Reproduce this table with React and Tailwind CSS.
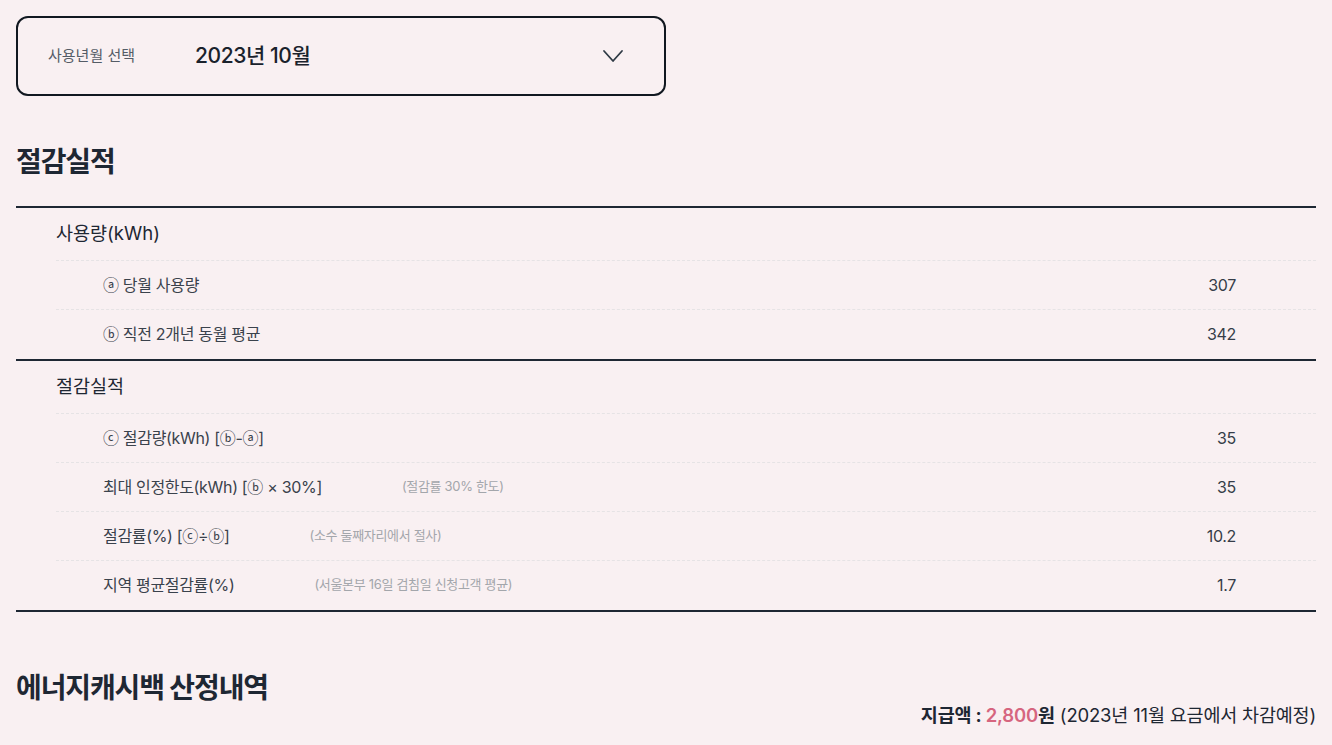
const font = { fontFamily: 'Inter, "Noto Sans CJK KR", sans-serif' };

const groups = [
  {
    title: "사용량(kWh)",
    rows: [
      { label: "ⓐ 당월 사용량", value: "307" },
      { label: "ⓑ 직전 2개년 동월 평균", value: "342" },
    ],
  },
  {
    title: "절감실적",
    rows: [
      { label: "ⓒ 절감량(kWh) [ⓑ-ⓐ]", value: "35" },
      { label: "최대 인정한도(kWh) [ⓑ × 30%]", note: "(절감률 30% 한도)", value: "35" },
      { label: "절감률(%) [ⓒ÷ⓑ]", note: "(소수 둘째자리에서 절사)", value: "10.2" },
      { label: "지역 평균절감률(%)", note: "(서울본부 16일 검침일 신청고객 평균)", value: "1.7" },
    ],
  },
];

function Chevron() {
  return (
    <svg width="22" height="16" viewBox="0 0 22 16" fill="none">
      <polyline points="2,3 11,13 20,3" stroke="#2f3a45" strokeWidth="1.8" strokeLinecap="round" strokeLinejoin="round" />
    </svg>
  );
}

export default function App() {
  return (
    <div className="min-h-screen bg-[#f9f0f2] px-4 pt-4 text-[#1e2733]" style={font}>
      {/* month select */}
      <div className="flex h-20 w-[650px] items-center rounded-xl border-2 border-[#111820] pl-[30px] pr-10">
        <span className="w-[147px] text-[15px] text-[#555c66]">사용년월 선택</span>
        <span className="text-[21px] font-medium tracking-[-0.02em] text-[#1a222c]">2023년 10월</span>
        <span className="ml-auto">
          <Chevron />
        </span>
      </div>

      <h2 className="mt-[48px] text-[28px] font-bold leading-[36px] tracking-[-0.04em]">절감실적</h2>

      <div className="mt-[26px] border-b-2 border-[#1e2733]">
        {groups.map((g) => (
          <div key={g.title} className="border-t-2 border-[#1e2733]">
            <div className="flex h-[52px] items-center pl-10 text-[18.5px] text-[#1e2733]">{g.title}</div>
            <div className="ml-10 pb-px">
              {g.rows.map((r) => (
                <div key={r.label} className="flex h-[49px] items-center border-t border-dashed border-[#e6e3e5] pl-[47px] pr-[80px] text-base tracking-[-0.02em] text-[#3a424c]">
                  <span>{r.label}</span>
                  {r.note && <span className="ml-20 text-[13px] text-[#a3a6ab]">{r.note}</span>}
                  <span className="ml-auto text-[#353d48]">{r.value}</span>
                </div>
              ))}
            </div>
          </div>
        ))}
      </div>

      <h2 className="mt-[58px] text-[28px] font-bold leading-[36px] tracking-[-0.04em]">에너지캐시백 산정내역</h2>
      <p className="-mt-[4px] text-right text-[18.5px] tracking-[-0.01em] text-[#1e2733]">
        <span className="font-bold">지급액 : </span>
        <span className="font-semibold text-[#d6657f]">2,800</span>
        <span className="font-bold">원</span> (2023년 11월 요금에서 차감예정)
      </p>
    </div>
  );
}
